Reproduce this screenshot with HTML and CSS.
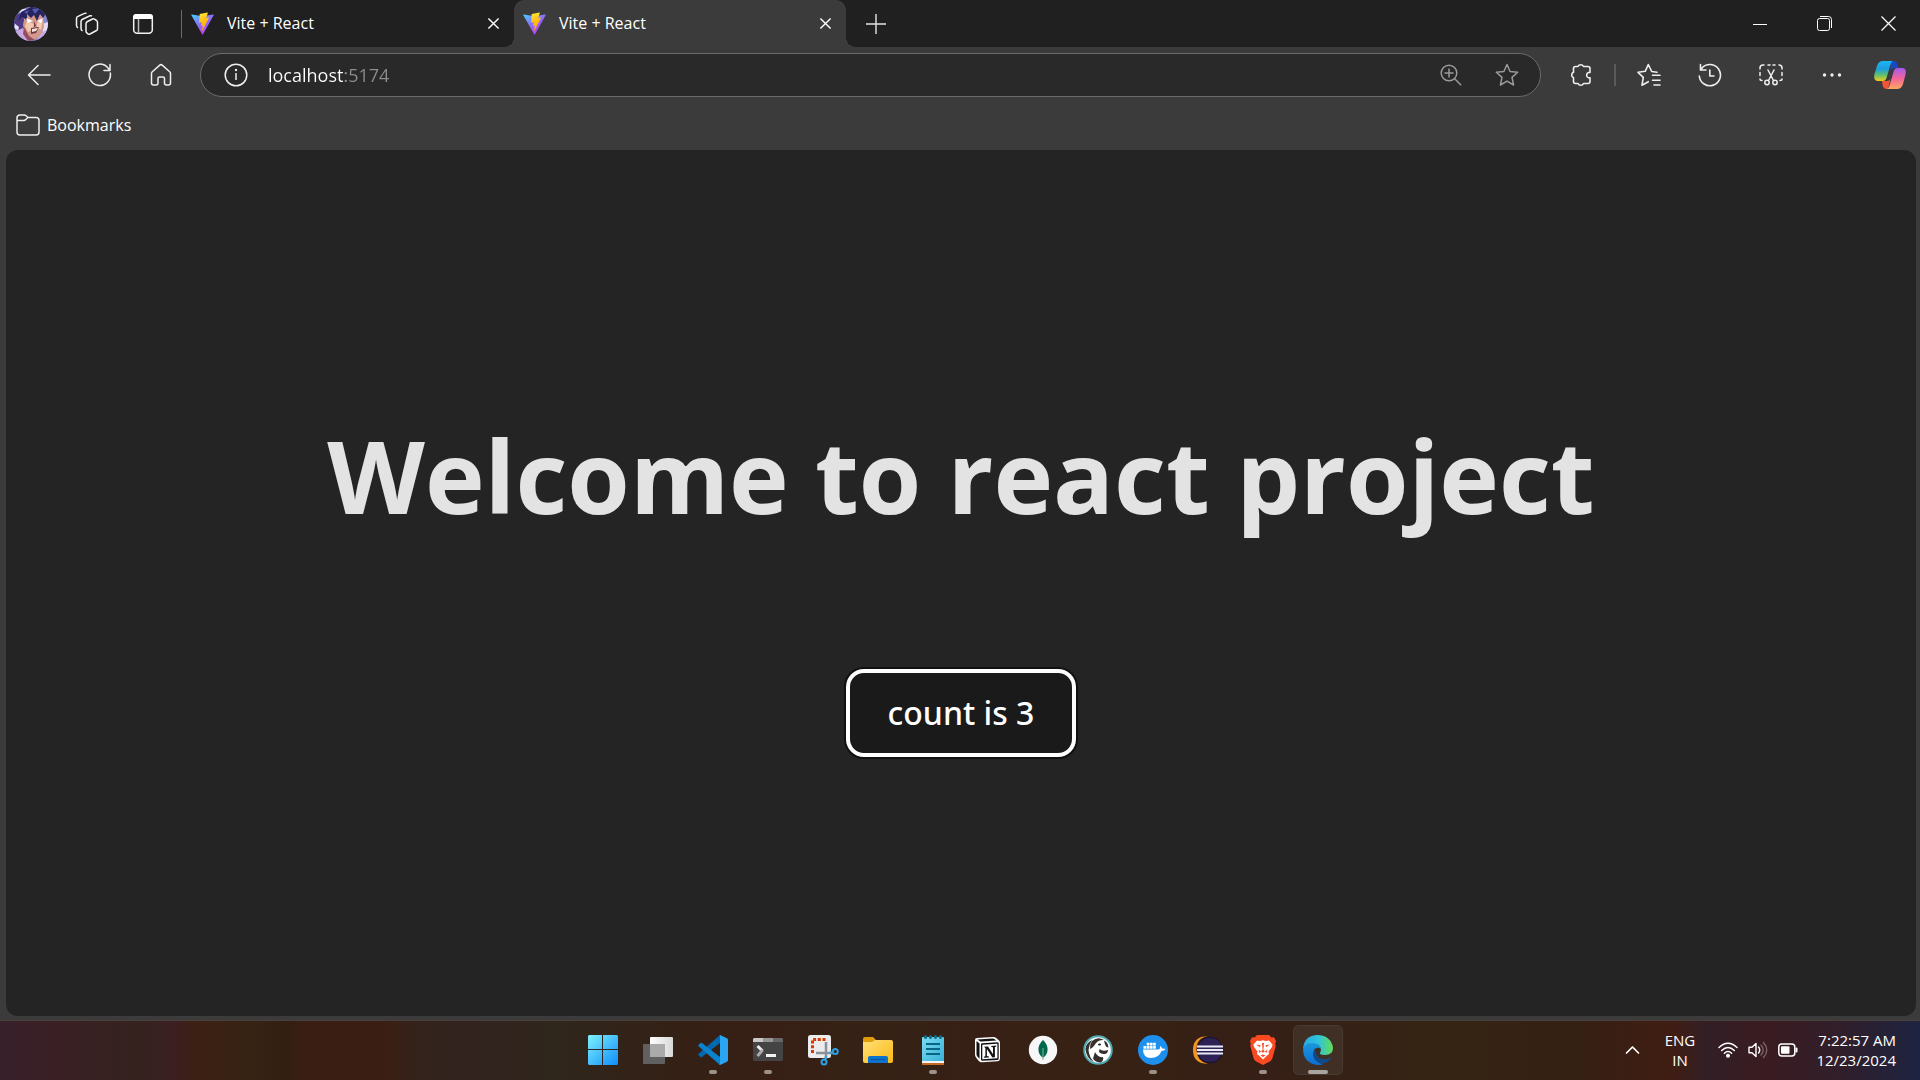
FILE: index.html
```html
<!DOCTYPE html>
<html lang="en">
<head>
<meta charset="utf-8">
<meta name="viewport" content="width=device-width, initial-scale=1">
<title>Vite + React</title>
<link rel="stylesheet" href="styles.css">
</head>
<body>
<svg class="defs" aria-hidden="true">
  <defs>
    <linearGradient id="vite-a" x1="0" y1="0" x2=".7" y2="1"><stop offset="0" stop-color="#41d1ff"/><stop offset=".5" stop-color="#8a70fb"/><stop offset="1" stop-color="#bd34fe"/></linearGradient>
    <linearGradient id="vite-b" x1=".4" y1="0" x2=".6" y2="1"><stop offset="0" stop-color="#ffea33"/><stop offset=".3" stop-color="#ffc820"/><stop offset="1" stop-color="#ff9f00"/></linearGradient>
    <symbol id="vite" viewBox="0 0 24 24">
      <path fill="url(#vite-a)" d="M23.6 3.4 12.6 23.2c-.2.4-.8.4-1 0L.4 3.4c-.3-.5.1-1 .6-.9l11 2 11-2c.5-.1.9.4.6.9z"/>
      <path fill="url(#vite-b)" d="m17.2.4-8.1 1.6-.6 8.8c0 .3.2.5.5.4l2.3-.5-.7 3.4c0 .3.2.5.5.4l1.4-.4-1.1 5.3c-.1.4.4.5.6.2l6.7-13.4c.1-.3-.1-.5-.4-.5l-2.4.5L17.600.9z"/>
    </symbol>
    <symbol id="close" viewBox="0 0 14 14"><path d="m1.500 1.500 11 11m0-11-11 11" fill="none" stroke="currentColor" stroke-width="1.500"/></symbol>
  </defs>
</svg>

<div class="window">
  <header class="tabstrip">
    <button class="lead" aria-label="Profile">
      <svg width="34" height="34" viewBox="0 0 34 34">
        <defs><clipPath id="av"><circle cx="17" cy="17" r="17"/></clipPath></defs>
        <g clip-path="url(#av)">
          <path fill="#8587cf" d="M0 0h34v34H0z"/>
          <path fill="#e6def4" d="M4 2h9L8 10zM2 14l6 4-3 6-5-3zM28 17l6-2v12l-5 2z"/>
          <path fill="#4d3a83" d="m0 8 8-2 3 10-3 10-5 2 2-8-5-4z"/>
          <path fill="#c7a9df" d="m0 25 9-4 6 13H3zM24 28l8-5v11h-9z"/>
          <path fill="#d39a8c" d="m11 7 18 1 1 12-4 9-6 4-8-5-3-10z"/>
          <path fill="#f2c8b0" d="m13 14 7 3-2 6-4 2-3-6zM23 16l6-3-2 10-4-3z"/>
          <path fill="#27235f" d="M7 5 17 0h12l2 8-2 3-3-4-3 7-3-6-3 3-4-4 0 6-5-3-4 4z"/>
          <path fill="#5359b2" d="m18 2 8-1-5 6zM10 5l5-2-2 4z"/>
          <path fill="#fff" d="m12 11 7 3-5 2zM23 14l6-3-2 5z"/>
          <path fill="#713743" d="m17 21 8-1-3 6-5 1zM20 14l2 5-2 1z"/><path fill="#f8e4df" d="m18 22 6-1-2 3-4 1z"/>
          <path fill="#944c61" d="m10 20 5 9 6 4-7 1-5-7z"/>
        </g>
      </svg>
    </button>
    <button class="lead" aria-label="Workspaces">
      <svg width="24" height="24" viewBox="0 0 24 24" fill="none" stroke="#f2f2f2" stroke-width="1.500" stroke-linejoin="round"><path d="m12.500 9.500 5-2.500q1-.4 2 .2l2 1.300q1 .700 1 1.800V17q0 1-1 1.500L15 22q-1 .5-2-.2l-1.200-1q-.8-.6-.8-1.500v-7.500q0-1.600 1.500-2.300z"/><path d="M7.500 19Q6 18 6 16.500v-7Q6 8 7.500 7.300L15 3.800q1-.4 2 .2"/><path d="M3 16q-1.500-1-1.500-2.500v-7Q1.500 5 3 4.400L9.500 1.400q1-.5 2 .1"/></svg>
    </button>
    <button class="lead" aria-label="Tab actions">
      <svg width="22" height="22" viewBox="0 0 22 22"><rect x="1.700" y="1.700" width="18.600" height="18.600" rx="3.500" fill="none" stroke="#f2f2f2" stroke-width="1.500"/><path fill="#fff" d="M1 6V4q0-3 3-3h14q3 0 3 3v2z"/><path d="M6.500 6v14" stroke="#bbb" stroke-width="1.500"/></svg>
    </button>
    <span class="strip-line"></span>
    <div class="tab">
      <svg class="favicon"><use href="#vite"/></svg>
      <span class="tab-title">Vite + React</span>
      <button class="tab-close" aria-label="Close tab"><svg width="13" height="13"><use href="#close"/></svg></button>
    </div>
    <div class="tab tab-active">
      <svg class="favicon"><use href="#vite"/></svg>
      <span class="tab-title">Vite + React</span>
      <button class="tab-close" aria-label="Close tab"><svg width="13" height="13"><use href="#close"/></svg></button>
    </div>
    <button class="new-tab" aria-label="New tab"><svg width="20" height="20" viewBox="0 0 20 20"><path d="M10 0v20M0 10h20" stroke="#e4e4e4" stroke-width="1.400"/></svg></button>
    <div class="window-controls">
      <button aria-label="Minimize"><svg width="14" height="14"><path d="M0 7.500h14" stroke="#fff"/></svg></button>
      <button aria-label="Restore"><svg width="15" height="15" fill="none" stroke="#fff"><rect x=".5" y="2.500" width="12" height="12" rx="2"/><path d="M3 .5h8.500q3 0 3 3V12"/></svg></button>
      <button aria-label="Close"><svg width="15" height="15"><path d="m.5.5 14 14m0-14-14 14" stroke="#fff" stroke-width="1.200"/></svg></button>
    </div>
  </header>

  <nav class="toolbar" aria-label="Navigation">
    <button class="nav" aria-label="Back"><svg width="24" height="22" viewBox="0 0 24 22" fill="none" stroke="#eee" stroke-width="1.500" stroke-linecap="round" stroke-linejoin="round"><path d="M23 11H1.500M11 1.500 1.500 11l9.500 9.500"/></svg></button>
    <button class="nav" aria-label="Refresh"><svg width="24" height="24" viewBox="0 0 24 24" fill="none" stroke="#eee" stroke-width="1.500" stroke-linecap="round" stroke-linejoin="round"><path d="M22.300 10A10.700 10.700 0 1 1 20 5l2 2.500M22 1.500v6h-6"/></svg></button>
    <button class="nav" aria-label="Home"><svg width="22" height="24" viewBox="0 0 22 24" fill="none" stroke="#eee" stroke-width="1.500" stroke-linejoin="round"><path d="M1.500 10.500q0-1 .8-1.700l7.500-6.700q1.200-1 2.400 0l7.500 6.700q.8.700.8 1.700V20q0 2-2 2h-2q-2 0-2-2v-4.500q0-1.500-1.500-1.500h-3.500q-1.500 0-1.500 1.500V20q0 2-2 2h-2.500q-2 0-2-2z"/></svg></button>
    <form class="address">
      <button type="button" aria-label="Site information"><svg width="24" height="24" viewBox="0 0 24 24"><circle cx="12" cy="12" r="10.800" fill="none" stroke="#eee" stroke-width="1.500"/><path d="M12 10v7" stroke="#eee" stroke-width="1.500"/><circle cx="12" cy="7" r="1.200" fill="#eee"/></svg></button>
      <input class="url" type="text" aria-label="Address" value="localhost:5174">
      <button type="button" class="dim" aria-label="Zoom"><svg width="22" height="22" viewBox="0 0 22 22" fill="none" stroke="#9a9a9a" stroke-width="1.500" stroke-linecap="round"><circle cx="9" cy="9" r="7.800"/><path d="m14.700 14.700 6 6M9 5v8M5 9h8"/></svg></button>
      <button type="button" class="dim" aria-label="Add to favorites"><svg width="24" height="24" viewBox="0 0 24 24" fill="none" stroke="#9a9a9a" stroke-width="1.500" stroke-linejoin="round"><path d="m12 1.500 3.100 7 7.600.8-5.700 5.100 1.600 7.600-6.600-3.900L5.400 22 7 14.400 1.300 9.300l7.600-.8z"/></svg></button>
    </form>
    <button class="ext" aria-label="Extensions"><svg width="22" height="24" viewBox="0 0 22 24" fill="none" stroke="#eee" stroke-width="1.600" stroke-linejoin="round"><path d="M8 3.500a3 3 0 0 1 5.500 0H18q2 0 2 2v4h-1.500a2.800 2.800 0 0 0 0 5.300H20V18.500q0 2-2 2h-4.500a3 3 0 0 1-5.500 0H5.500q-2 0-2-2v-3.700a3 3 0 0 1 0-5.500v-3.800q0-2 2-2z"/></svg></button>
    <span class="tool-line"></span>
    <button class="tool" aria-label="Favorites"><svg width="24" height="24" viewBox="0 0 24 24" fill="none" stroke="#eee" stroke-width="1.600" stroke-linejoin="round" stroke-linecap="round"><path d="M20 9.300 14.700 8.500 11.300 1.500 8.200 8.300l-7.200 1 5.300 5.100L5 22.200l6.300-3.500M15.500 12.300H23M15.500 17.300H23M17 22h6"/></svg></button>
    <button class="tool" aria-label="History"><svg width="24" height="24" viewBox="0 0 24 24" fill="none" stroke="#eee" stroke-width="1.600" stroke-linecap="round" stroke-linejoin="round"><path d="M1.300 13A10.600 10.600 0 1 0 4 5L2.500 7M2.500 1.500V7H8M11.800 7v6H16"/></svg></button>
    <button class="tool" aria-label="Screenshot"><svg width="24" height="22" viewBox="0 0 24 22" fill="none" stroke="#eee" stroke-width="1.500" stroke-linecap="round"><path d="M1 5V4q0-3 3-3h1M9 1h2M14 1h2M20 1q3 0 3 3v1M1 8.500v3M23 8.500v3M1 15q0 1.500 2 1.500M23 15q0 1.500-2 1.500M9 6l5.500 10.500M15 6 9.500 16.500"/><circle cx="8" cy="18.500" r="2.200"/><circle cx="16" cy="18.500" r="2.200"/></svg></button>
    <button class="tool" aria-label="Settings and more"><svg width="20" height="6" fill="#eee"><circle cx="2.500" cy="3" r="1.700"/><circle cx="10" cy="3" r="1.700"/><circle cx="17.500" cy="3" r="1.700"/></svg></button>
    <button class="copilot" aria-label="Copilot"><svg width="32" height="30" viewBox="0 0 32 30">
      <defs>
        <linearGradient id="cp-a" x1="0" y1="0" x2="0" y2="1"><stop offset="0" stop-color="#1bb5f5"/><stop offset=".4" stop-color="#1d9ce0"/><stop offset=".7" stop-color="#5fc070"/><stop offset="1" stop-color="#f5cb18"/></linearGradient>
        <linearGradient id="cp-b" x1="0" y1="0" x2="0" y2="1"><stop offset="0" stop-color="#a45bf0"/><stop offset=".5" stop-color="#f4649a"/><stop offset="1" stop-color="#fba85e"/></linearGradient>
      </defs>
      <path fill="#1648c8" d="M17 1h2.500q3 0 3.800 3l1.200 4h-4q-3 0-4 3z"/>
      <path fill="#f0553a" d="M8 21h5q2.500 0 3.500-2L14 29h-1.500q-3 0-4-4z"/>
      <path fill="url(#cp-a)" d="M9 1h9.500q-1.500 1.500-2.500 5l-3.500 12q-1 3-3.500 3H4q-5 0-3.500-7L3 6q1.500-5 6-5z"/>
      <path fill="url(#cp-b)" d="M23 29h-9.500q1.500-1 2.500-5l3.500-12q1-4 4-4H28q5 0 3.500 6.500L29 24q-1.500 5-6 5z"/></svg></button>
  </nav>

  <nav class="bookmarks" aria-label="Bookmarks bar">
    <a class="bookmark" href="#bookmarks"><svg width="24" height="22" viewBox="0 0 24 22" fill="none" stroke="#eee" stroke-width="1.500" stroke-linejoin="round"><path d="M1 6.500V4q0-3 3-3h4q1.500 0 2.300 1L12 3.500h8q3 0 3 3V18q0 3-3 3H4q-3 0-3-3zM1 6.500h6.500q1.500 0 2.300-1L12 3.500"/></svg>Bookmarks</a>
  </nav>

  <main class="page">
    <h1>Welcome to react project</h1>
    <button class="counter" autofocus>count is 3</button>
  </main>

  <footer class="taskbar">
    <div class="apps">
      <button class="app" aria-label="Start"><svg width="30" height="30" viewBox="0 0 30 30"><defs><linearGradient id="win" gradientUnits="userSpaceOnUse" x1="0" y1="0" x2="30" y2="30"><stop stop-color="#7df1fd"/><stop offset="1" stop-color="#0f8dfb"/></linearGradient></defs><path fill="url(#win)" d="M1 0h13v14H0V1zM15 0h14l1 1v13H15zM0 15h14v15H1l-1-1zM15 15h15v14l-1 1H15z"/></svg></button>
      <button class="app" aria-label="Task view"><svg width="32" height="30" viewBox="0 0 32 30"><defs><linearGradient id="tv"><stop stop-color="#fff"/><stop offset="1" stop-color="#d8d8d8"/></linearGradient></defs><rect x="8" y="2" width="23" height="20" rx="1" fill="url(#tv)"/><rect x="1" y="9" width="22" height="20" rx="1" fill="#606060"/><path fill="#aaa" d="M8 9h15v13H8z"/></svg></button>
      <button class="app running" aria-label="Visual Studio Code"><svg width="30" height="30" viewBox="0 0 30 30"><path fill="#0069b0" d="m.5 20 2 2q.7.600 1.500 0L22 8V0L.6 18.700q-.8.700-.1 1.300z"/><path fill="#0a82cc" d="m.5 10 2-2q.7-.6 1.500 0L22 22v8L.6 11.300q-.8-.7-.1-1.300z"/><path fill="#2aa5f2" d="m22 0 6.500 3Q30 3.700 30 5v20q0 1.300-1.500 2L22 30q-1 0-1.500-.5 1.500 1 1.500-1V1.500q0-2-1.500-1Q21 0 22 0z"/></svg></button>
      <button class="app running" aria-label="Terminal"><svg width="30" height="24" viewBox="0 0 30 24"><rect width="30" height="23" rx="1.500" fill="#444"/><path fill="#c8c8c8" d="M1 0h9v4H0V1z"/><path fill="#969696" d="M10 0h10v4H10z"/><path fill="#686868" d="M20 0h9l1 1v3H20z"/><path d="m4.500 8 5 5" stroke="#eee" stroke-width="3"/><path d="m9.500 12-5 6" stroke="#aaa" stroke-width="3"/><path fill="#f2f2f2" d="M13 16h10v3H13z"/></svg></button>
      <button class="app" aria-label="Snipping Tool"><svg width="32" height="32" viewBox="0 0 32 32"><rect x="1" y="1" width="23" height="23" rx="2.500" fill="#ececec"/><path d="M5.500 19V5.500H19" fill="none" stroke="#d83b01" stroke-width="3" stroke-dasharray="3 1.700"/><path d="M19 8v17M9 19h18" stroke="#8b9199" stroke-width="2.500"/><g fill="none" stroke="#2ba1e6" stroke-width="2"><circle cx="28.300" cy="17.500" r="2.500"/><circle cx="17" cy="28" r="2.500"/><path d="m22 19 4-1M19 22l-1 4"/></g></svg></button>
      <button class="app" aria-label="File Explorer"><svg width="30" height="28" viewBox="0 0 30 28"><defs><linearGradient id="fold" x2="1" y2="1"><stop stop-color="#ffe07a"/><stop offset="1" stop-color="#fdb913"/></linearGradient></defs><path fill="#df9c0b" d="M0 3q0-2 2-2h8l3 3v4H0z"/><path fill="url(#fold)" d="M0 6h9l3-2h16q2 0 2 2v19q0 2-2 2H2q-2 0-2-2z"/><path fill="#0c72ce" d="M5 27v-5q0-2 2-2h16q2 0 2 2v5z"/><path d="M8 23.500h14" stroke="#09549c"/></svg></button>
      <button class="app running" aria-label="Notepad"><svg width="24" height="30" viewBox="0 0 24 30"><defs><linearGradient id="np" x2="1" y2="1"><stop stop-color="#7bdcf2"/><stop offset="1" stop-color="#39b0d8"/></linearGradient></defs><path fill="#c26a28" d="M1 26h22v4H1z"/><path fill="#f4f4f4" d="M1 24h22v4H1z"/><path fill="url(#np)" d="M1 3q0-1 1-1h20q1 0 1 1v23H1z"/><path stroke="#086683" stroke-width="2" d="M5 9h14M5 14h14M5 19h14"/><path stroke="#106e8b" stroke-width="3" stroke-linecap="round" d="M4.500 1.500v1M9.500 1.500v1M14.500 1.500v1M19.500 1.500v1"/></svg></button>
      <button class="app" aria-label="Notion"><svg width="26" height="26" viewBox="0 0 26 26"><path fill="#fff" d="m2 1 16-1q2 0 3.500 1.300L24 3.500q1 .8 1 2.500v15.500q0 2.500-2.500 2.700L7 25.300q-2 .1-3.200-1.300L1 20.500Q0 19 0 17.500V3q0-2 2-2z"/><path fill="#111" d="m2.500 2.500 15-.9q1.500 0 2.500.8l1.500 1.200L6.500 4.500Q5.500 4.500 4.700 4zM1.500 4l3 2.500V22l-2.300-2.800q-.7-.9-.7-2.200zM6 7.200q0-1 1-1l15.500-.9q1.200 0 1.200 1.200v15q0 1.300-1.200 1.400L7.500 23.800Q6 23.800 6 22.400z"/><path fill="#fff" d="M7.300 7.700 22.400 6.800v14.500L7.300 22.300z"/><path fill="#111" d="m9 9.800 4-.3 5 7.700v-7l-1.700-.3v-1l5-.3v1l-1.400.4v10.300l-2.500.2-5.500-8.500v7l2 .4v1l-5 .3v-1l1.500-.5V11z"/></svg></button>
      <button class="app" aria-label="MongoDB Compass"><svg width="30" height="30" viewBox="0 0 30 30"><circle cx="15" cy="15" r="14.200" fill="#f7f7f7"/><path fill="#00684a" d="M15 5q5 4.500 4.500 10.500-.3 4-4 7h-1q-3.700-3-4-7Q10 9.500 15 5z"/><path d="M15 13v12" stroke="#81b49c"/></svg></button>
      <button class="app" aria-label="DBeaver"><svg width="30" height="30" viewBox="0 0 30 30"><circle cx="15" cy="15" r="13.800" fill="#fff" stroke="#4fabb4" stroke-width="2"/><path fill="#36302d" d="M2.500 14Q3 8 9 5q-3 5-3.500 10 .5 7 5.500 12-8-4-8.500-13zM9 6q6-5 12-1-5-.5-8 3-3 5-6 6 0-5 2-8zM21 5.500q4 1.500 4.500 7-3-.5-3.500-3zM16.500 14q3 3 8.500 1 0 3-3 4-4 .5-6-2zM12 17q3 6 8 5 1 3-2 5.500-6 0-8-4z"/><ellipse cx="16.500" cy="9.500" rx="1.500" ry="1" fill="#222"/></svg></button>
      <button class="app running" aria-label="Docker Desktop"><svg width="30" height="30" viewBox="0 0 30 30"><circle cx="15" cy="15" r="15" fill="#1d90ed"/><path fill="#fff" d="M5 14.500h15q2.500 0 2-3.500 2 .5 2 2.500 2-.4 3.500.5-1 2-4 2-2.500 7-10.500 7-8 0-8-8.500zM5.500 11h2.700v2.700H5.500zM8.700 11h2.700v2.700H8.700zM11.900 11h2.700v2.700h-2.700zM15.100 11h2.700v2.700h-2.700zM8.700 7.800h2.700v2.700H8.700zM11.900 7.800h2.700v2.700h-2.700zM15.100 7.800h2.700v2.700h-2.700z"/></svg></button>
      <button class="app" aria-label="Eclipse"><svg width="30" height="28" viewBox="0 0 30 28"><path fill="#f39423" d="M15 .2Q3 2 3.500 14 4 26 15 27.800 0 28 0 14 0 0 15 .2z"/><circle cx="17" cy="14" r="12.800" fill="#2c2255" stroke="#15112b"/><path stroke="#eceaf5" stroke-width="2" d="M4 10.500h26M4 14h26M4 17.500h26"/></svg></button>
      <button class="app running" aria-label="Brave"><svg width="26" height="30" viewBox="0 0 26 30"><path fill="#fb4a22" d="m7 0h12l2.500 2.500 2.500-.2L26 6l-.8 3 .5 2-3.200 12q-.6 2-2.300 3.200L13 30l-7.200-3.800Q4 25 3.500 23L.3 11l.5-2L0 6l2-3.700 2.500.2z"/><path fill="#fff" d="m7 5.500 3 .5 3-.7 3 .7 3-.5L22.500 9.500l-.5 2.500-3.500 4.500.5 2.500-2.500 2-3.500 3.500L9.500 21 7 19l.5-2.500L4 12l-.5-2.500z"/><path fill="#fb4a22" d="m6 9.500 4.500.8-.5 2zM20 9.500l-4.500.8.5 2zM12 8h2l-.6 7 1.600 1.200-2 1.600-2-1.600 1.600-1.200zM8.500 14.500l2.500 2-1.500 1.500zM17.500 14.500l-2.500 2 1.500 1.500zM10.500 20.500l2.500-1 2.500 1-2.500 1.500z"/></svg></button>
      <button class="app current" aria-label="Microsoft Edge"><svg width="30" height="30" viewBox="0 0 30 30"><defs><linearGradient id="ed-a"><stop stop-color="#29a8e0"/><stop offset=".5" stop-color="#2fc3df"/><stop offset="1" stop-color="#64dc54"/></linearGradient><linearGradient id="ed-b" x2="0" y2="1"><stop stop-color="#1b97dc"/><stop offset="1" stop-color="#0b6ed6"/></linearGradient></defs><path fill="url(#ed-a)" d="M0 14Q1 0 15 0q8 0 12.500 6Q30 10 30 13q0 7-8 7-6 0-5-2.500 1-1 1-3Q17 9 11 9 3 9 0 14z"/><path fill="url(#ed-b)" d="M0 14q2-6 9-6 8 0 9 6-2-2-4.500-1-3 1-3 5Q11 27 20 29.200 15 31 9 28.700 0 25 0 14z"/><path fill="#114a8b" d="M12 14q-4 6 0 11 6 6 13 1.500 3-2.500 3-4-3 1.500-7 1.500-8 0-9-10z"/></svg></button>
    </div>
    <div class="tray">
      <button class="tray-more" aria-label="Show hidden icons"><svg width="15" height="10" viewBox="0 0 15 10" fill="none" stroke="#fff" stroke-width="1.700" stroke-linecap="round" stroke-linejoin="round"><path d="m1.500 8 6-6 6 6"/></svg></button>
      <button class="tray-text lang">ENG<br>IN</button>
      <button class="status" aria-label="Network, volume and battery">
        <svg width="20" height="16" viewBox="0 0 20 16" fill="none" stroke="#fff" stroke-width="1.500" stroke-linecap="round"><path d="M1 5.500Q10-3 19 5.500M3.700 8.500q6.300-6 12.600 0M6.400 11.300q3.600-3.500 7.200 0"/><circle cx="10" cy="13.700" r="1.300" fill="#fff"/></svg>
        <svg width="20" height="18" viewBox="0 0 20 18" fill="none" stroke="#fff" stroke-width="1.400" stroke-linecap="round" stroke-linejoin="round"><path d="M1 6.200h3L8 2.500v13L4 11.800H1zM10.500 6q2.500 3 0 6"/><path stroke="#7a6268" d="M13 4q4.500 5 0 10M15.500 1.500q6.500 7.500 0 15"/></svg>
        <svg width="20" height="14" viewBox="0 0 20 14"><rect x=".8" y="1" width="16" height="12" rx="3" fill="none" stroke="#fff" stroke-width="1.500"/><rect x="3" y="3.300" width="8.500" height="7.400" rx="1" fill="#fff"/><path d="M18.500 5.500v3" stroke="#fff" stroke-width="2" stroke-linecap="round"/></svg>
      </button>
      <button class="tray-text clock">7:22:57 AM<br>12/23/2024</button>
    </div>
  </footer>
</div>
</body>
</html>
```

FILE: styles.css
```css
* { box-sizing: border-box; }

body {
  margin: 0;
  font-family: "Open Sans", "Noto Sans", sans-serif;
  font-size: 16px;
  line-height: 20px;
  color: #fff;
  background: #3b3b3b;
}

button {
  display: flex;
  align-items: center;
  justify-content: center;
  padding: 0;
  border: 0;
  background: none;
  color: inherit;
  font: inherit;
}

svg { display: block; flex: none; }
.defs { position: absolute; width: 0; height: 0; }

.window {
  display: flex;
  flex-direction: column;
  min-height: 100vh;
}

/* Tab strip */
.tabstrip {
  display: flex;
  height: 47px;
  padding-left: 3px;
  background: #202020;
}
.lead { width: 56px; }
.strip-line {
  align-self: center;
  width: 1px;
  height: 28px;
  margin-left: 10px;
  background: #6a6a6a;
}
.tab {
  position: relative;
  display: flex;
  align-items: center;
  flex: 0 1 332px;
  padding: 0 14px 0 9px;
}
.favicon { width: 23px; height: 23px; }
.tab-title { flex: 1; padding: 0 0 2px 13px; }
.tab-active {
  border-radius: 10px 10px 0 0;
  background: #3b3b3b;
}
.tab-active::before,
.tab-active::after {
  content: "";
  position: absolute;
  bottom: 0;
  width: 10px;
  height: 10px;
}
.tab-active::before {
  left: -10px;
  background: radial-gradient(circle at 0 0, #202020 10px, #3b3b3b 10px);
}
.tab-active::after {
  right: -10px;
  background: radial-gradient(circle at 100% 0, #202020 10px, #3b3b3b 10px);
}
.new-tab { width: 60px; }
.window-controls { display: flex; margin-left: auto; }
.window-controls button { width: 64px; }

/* Toolbar */
.toolbar {
  display: flex;
  align-items: center;
  height: 56px;
  padding: 0 3px 0 8px;
}
.nav { width: 61px; height: 44px; }
.address {
  display: flex;
  align-items: center;
  flex: 1;
  height: 44px;
  margin: 0 10px 0 9px;
  padding: 0 5px 0 23px;
  border: 1px solid #6b6b6b;
  border-radius: 22px;
  background: #292929;
}
.url {
  flex: 1;
  min-width: 0;
  margin-left: 20px;
  padding: 0;
  border: 0;
  outline: 0;
  font: 18px/24px "Open Sans", "Noto Sans", sans-serif;
  color: transparent;
  background: linear-gradient(90deg, #fff 77px, #8d8d8d 77px);
  background-clip: text;
  -webkit-background-clip: text;
}
.dim { width: 56px; height: 40px; }
.ext { width: 60px; height: 44px; }
.tool { width: 61px; height: 44px; }
.tool-line {
  width: 2px;
  height: 22px;
  margin: 0 2px 0 3px;
  background: #5a5a5a;
}
.copilot { width: 55px; height: 44px; }

/* Bookmarks bar */
.bookmarks {
  display: flex;
  align-items: center;
  height: 47px;
  padding: 0 16px 4px;
}
.bookmark {
  display: flex;
  align-items: center;
  gap: 7px;
  color: #fff;
  text-decoration: none;
}

/* Page */
.page {
  display: flex;
  flex-direction: column;
  align-items: center;
  justify-content: center;
  flex: 1;
  gap: 136px;
  margin: 0 4px 4px 6px;
  padding-top: 4px;
  border-radius: 12px;
  background: #242424;
}
h1 {
  margin: 0;
  font-size: 101px;
  line-height: 120px;
  font-weight: 700;
  color: #e3e3e3;
}
.counter {
  min-width: 226px;
  padding: 20px 38px;
  border: 2px solid #fff;
  border-radius: 16px;
  outline: 0;
  box-shadow: 0 0 0 2px #fff, 0 0 0 4px #101010;
  background: #1a1a1a;
  font-family: "Noto Sans", "Open Sans", sans-serif;
  font-size: 32px;
  line-height: 40px;
  font-weight: 500;
}

/* Taskbar */
.taskbar {
  display: grid;
  grid-template-columns: 1fr auto 1fr;
  align-items: center;
  height: 60px;
  border-top: 1px solid #4a403c;
  background: linear-gradient(90deg, #38202b 0, #3a2024 3%, #35221f 7%, #3b1f22 9%, #3d2014 10%, #352314 13%, #331f12 15%, #3b1e13 16%, #3b1e13 20%, #33231c 22%, #32231f 25%, #2f261c 29%, #352015 36%, #371f15 40%, #352215 46%, #371f15 51%, #372214 57%, #351f16 66%, #352414 75%, #352014 82%, #401d12 87%, #321f26 89%, #3a1b21 92%, #301f2b 96%, #1d2341 100%);
}
.apps {
  display: flex;
  grid-column: 2;
  gap: 5px;
  padding: 0 0 2px 1px;
}
.app {
  position: relative;
  width: 50px;
  height: 50px;
  border-radius: 6px;
}
.running::after,
.current::after {
  content: "";
  position: absolute;
  bottom: 1px;
  width: 8px;
  height: 4px;
  border-radius: 2px;
  background: #9c928c;
}
.current { background: #402f25; box-shadow: inset 0 0 0 1px #4a392f; }
.current::after { width: 20px; background: #a8a5a1; }
.tray {
  display: flex;
  align-items: center;
  justify-content: flex-end;
  padding: 0 24px 2px 0;
}
.tray-more { width: 36px; height: 40px; }
.lang { width: 60px; }
.status { gap: 10px; padding: 0 8px; }
.clock { width: 90px; justify-content: flex-end; text-align: right; }
.tray-text { font-size: 15px; line-height: 20px; }
```
